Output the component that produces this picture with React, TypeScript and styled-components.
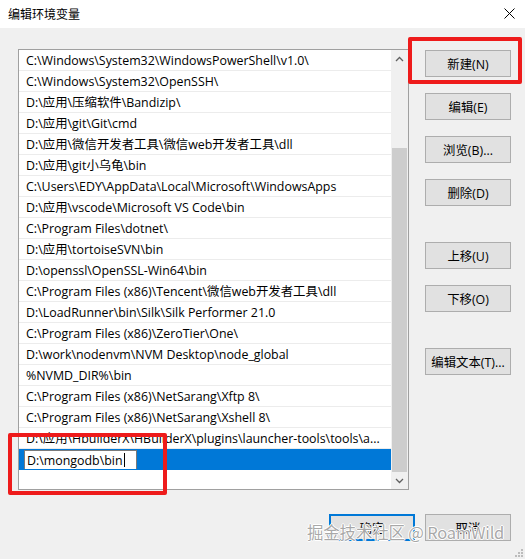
import React from "react";
import styled, { createGlobalStyle } from "styled-components";

const Global = createGlobalStyle`
  html, body { margin: 0; padding: 0; background: #f0f0f0; }
  body { width: 525px; height: 559px; overflow: hidden; font-family: "Segoe UI", "Open Sans", "Noto Sans CJK SC", sans-serif; }
`;

const Window = styled.div`
  position: relative;
  width: 525px;
  height: 559px;
  display: flex;
  flex-direction: column;
  background: #f0f0f0;
  color: #000;
  font-size: 12px;
`;

const TitleBar = styled.div`
  height: 28px;
  background: #fff;
  display: flex;
  align-items: center;
  justify-content: space-between;
  padding: 0 10px 2px 8px;
  box-sizing: border-box;
  font-family: "Noto Sans CJK SC", sans-serif;
  font-size: 12px;
  color: #000;
`;

const Body = styled.div`
  display: flex;
  padding: 21px 0 0 18px;
`;

const ListBox = styled.div`
  width: 391px;
  height: 441px;
  box-sizing: border-box;
  border: 1px solid #a0a0a0;
  background: #fff;
  display: flex;
`;

const Rows = styled.div`
  flex: 1;
  display: flex;
  flex-direction: column;
  min-width: 0;
`;

const Row = styled.div<{ $selected?: boolean }>`
  height: 21px;
  box-sizing: border-box;
  border-bottom: 1px solid ${(p) => (p.$selected ? "#0078d7" : "#ececec")};
  background: ${(p) => (p.$selected ? "#0078d7" : "transparent")};
  padding-left: 7px;
  display: flex;
  align-items: center;
  white-space: nowrap;
  overflow: hidden;
  font-family: "Segoe UI", "Open Sans", "Noto Sans CJK SC", sans-serif;
  font-size: 12.4px;
  color: #000;
`;

const EditBox = styled.div`
  margin-left: -2px;
  margin-top: 2px;
  width: 113px;
  height: 20px;
  box-sizing: border-box;
  border: 1px solid #7a7a7a;
  background: #fff;
  display: flex;
  align-items: center;
  padding-left: 2px;
`;

const Caret = styled.span`
  display: inline-block;
  width: 1px;
  height: 14px;
  background: #000;
  margin-left: 1px;
`;

const ScrollBar = styled.div`
  width: 17px;
  display: flex;
  flex-direction: column;
  background: #f0f0f0;
`;

const ArrowButton = styled.div`
  height: 17px;
  display: flex;
  align-items: center;
  justify-content: center;
`;

const Track = styled.div`
  flex: 1;
  display: flex;
  flex-direction: column;
  padding: 81px 1px 0 1px;
`;

const Thumb = styled.div`
  flex: 1;
  background: #cdcdcd;
`;

const SideColumn = styled.div`
  margin-left: 16px;
  padding-top: 1px;
  display: flex;
  flex-direction: column;
  width: 86px;
`;

const Button = styled.div<{ $gap?: number; $default?: boolean }>`
  height: 27px;
  box-sizing: border-box;
  margin-top: ${(p) => p.$gap ?? 0}px;
  border: 1px solid ${(p) => (p.$default ? "#0078d7" : "#adadad")};
  box-shadow: ${(p) => (p.$default ? "inset 0 0 0 1px #0078d7" : "none")};
  background: #e1e1e1;
  display: flex;
  align-items: center;
  justify-content: center;
  font-family: "Segoe UI", "Open Sans", "Noto Sans CJK SC", sans-serif;
  font-size: 12.4px;
  color: #000;
  width: 86px;
`;

const Footer = styled.div`
  display: flex;
  justify-content: flex-end;
  gap: 10px;
  padding: 24px 14px 0 0;
`;

const Highlight = styled.div<{ $l: number; $t: number; $w: number; $h: number }>`
  position: absolute;
  left: ${(p) => p.$l}px;
  top: ${(p) => p.$t}px;
  width: ${(p) => p.$w}px;
  height: ${(p) => p.$h}px;
  box-sizing: border-box;
  border: 4px solid #ee1b1b;
  border-radius: 2px;
  pointer-events: none;
`;

const Watermark = styled.div`
  position: absolute;
  left: 307px;
  top: 520px;
  font-family: "Noto Sans CJK SC", sans-serif;
  font-size: 16.5px;
  color: rgba(140, 140, 140, 0.75);
  letter-spacing: -0.2px;
  text-shadow: -1px 0 #fff, 1px 0 #fff, 0 -1px #fff, 0 1px #fff;
  white-space: nowrap;
  pointer-events: none;
`;

const Grip = styled.svg`
  position: absolute;
  right: 2px;
  bottom: 2px;
`;

const paths = [
  "C:\\Windows\\System32\\WindowsPowerShell\\v1.0\\",
  "C:\\Windows\\System32\\OpenSSH\\",
  "D:\\应用\\压缩软件\\Bandizip\\",
  "D:\\应用\\git\\Git\\cmd",
  "D:\\应用\\微信开发者工具\\微信web开发者工具\\dll",
  "D:\\应用\\git小乌龟\\bin",
  "C:\\Users\\EDY\\AppData\\Local\\Microsoft\\WindowsApps",
  "D:\\应用\\vscode\\Microsoft VS Code\\bin",
  "C:\\Program Files\\dotnet\\",
  "D:\\应用\\tortoiseSVN\\bin",
  "D:\\openssl\\OpenSSL-Win64\\bin",
  "C:\\Program Files (x86)\\Tencent\\微信web开发者工具\\dll",
  "D:\\LoadRunner\\bin\\Silk\\Silk Performer 21.0",
  "C:\\Program Files (x86)\\ZeroTier\\One\\",
  "D:\\work\\nodenvm\\NVM Desktop\\node_global",
  "%NVMD_DIR%\\bin",
  "C:\\Program Files (x86)\\NetSarang\\Xftp 8\\",
  "C:\\Program Files (x86)\\NetSarang\\Xshell 8\\",
  "D:\\应用\\HbuilderX\\HBuilderX\\plugins\\launcher-tools\\tools\\a...",
];

const sideButtons: { label: string; gap: number }[] = [
  { label: "新建(N)", gap: 0 },
  { label: "编辑(E)", gap: 16 },
  { label: "浏览(B)...", gap: 16 },
  { label: "删除(D)", gap: 16 },
  { label: "上移(U)", gap: 36 },
  { label: "下移(O)", gap: 16 },
  { label: "编辑文本(T)...", gap: 36 },
];

const Chevron = ({ up }: { up?: boolean }) => (
  <svg width="9" height="6" viewBox="0 0 9 6">
    <path
      d={up ? "M1 5 L4.5 1.5 L8 5" : "M1 1 L4.5 4.5 L8 1"}
      fill="none"
      stroke="#606060"
      strokeWidth="1.3"
    />
  </svg>
);

export default function App() {
  return (
    <>
      <Global />
      <Window>
        <TitleBar>
          <span>编辑环境变量</span>
          <svg width="11" height="11" viewBox="0 0 11 11">
            <path d="M0.5 0.5 L10.5 10.5 M10.5 0.5 L0.5 10.5" stroke="#000" strokeWidth="1" />
          </svg>
        </TitleBar>
        <Body>
          <ListBox>
            <Rows>
              {paths.map((p) => (
                <Row key={p}>{p}</Row>
              ))}
              <Row $selected>
                <EditBox>
                  D:\mongodb\bin
                  <Caret />
                </EditBox>
              </Row>
            </Rows>
            <ScrollBar>
              <ArrowButton>
                <Chevron up />
              </ArrowButton>
              <Track>
                <Thumb />
              </Track>
              <ArrowButton>
                <Chevron />
              </ArrowButton>
            </ScrollBar>
          </ListBox>
          <SideColumn>
            {sideButtons.map((b) => (
              <Button key={b.label} $gap={b.gap}>
                {b.label}
              </Button>
            ))}
          </SideColumn>
        </Body>
        <Footer>
          <Button $default>确定</Button>
          <Button>取消</Button>
        </Footer>
        <Highlight $l={408} $t={37} $w={114} $h={47} />
        <Highlight $l={8} $t={433} $w={159} $h={62} />
        <Watermark>掘金技术社区 @ RoamWild</Watermark>
        <Grip width="10" height="10" viewBox="0 0 10 10">
          <g fill="#bcbcbc">
            <rect x="8" y="2" width="2" height="2" />
            <rect x="5" y="5" width="2" height="2" />
            <rect x="8" y="5" width="2" height="2" />
            <rect x="2" y="8" width="2" height="2" />
            <rect x="5" y="8" width="2" height="2" />
            <rect x="8" y="8" width="2" height="2" />
          </g>
        </Grip>
      </Window>
    </>
  );
}
